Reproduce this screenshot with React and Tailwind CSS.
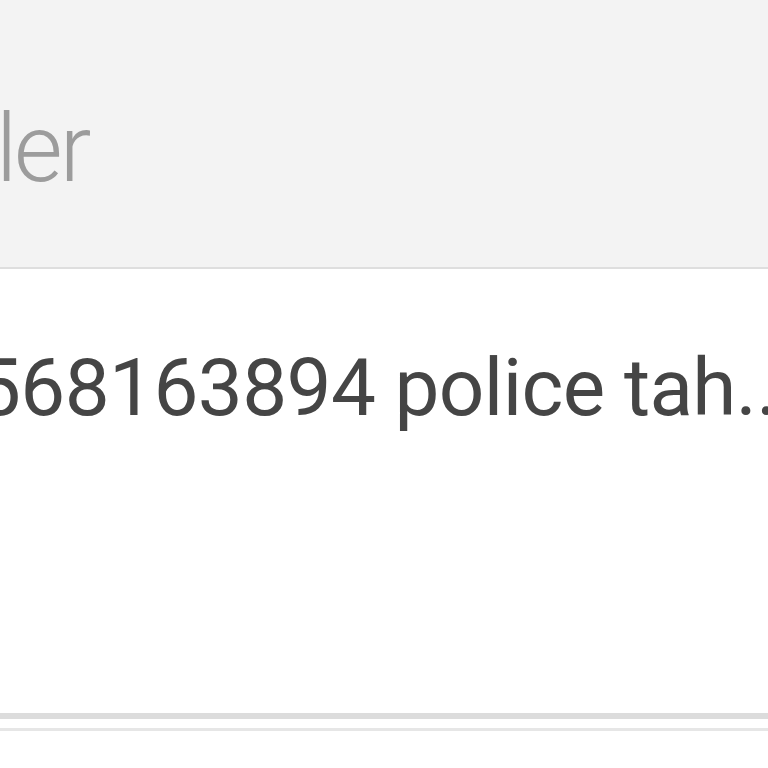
import React from "react";

function App() {
  return (
    <div
      className="w-[768px] h-[768px] overflow-hidden bg-white flex flex-col"
      style={{ fontFamily: "Roboto, 'Liberation Sans', sans-serif" }}
    >
      <div className="h-[269px] shrink-0 bg-[#f3f3f3] border-b-2 border-[#dedede] overflow-hidden">
        <div className="pt-[93px] -ml-[4px] text-[94px] leading-[1.2] font-light text-[#9c9c9c] whitespace-nowrap tracking-[-3px]">
          ler
        </div>
      </div>

      <div className="h-[444px] shrink-0 overflow-hidden">
        <div className="pt-[71px] -ml-[24px] text-[80px] leading-[1.2] text-[#454545] whitespace-nowrap tracking-[-0.6px]">
          568163894 police tah...
        </div>
      </div>

      <div className="h-[6px] shrink-0 bg-[#dcdcdc]" />
      <div className="h-[9px] shrink-0 bg-white" />
      <div className="h-[3px] shrink-0 bg-[#e6e6e6]" />
      <div className="flex-1 bg-white" />
    </div>
  );
}

export default App;
